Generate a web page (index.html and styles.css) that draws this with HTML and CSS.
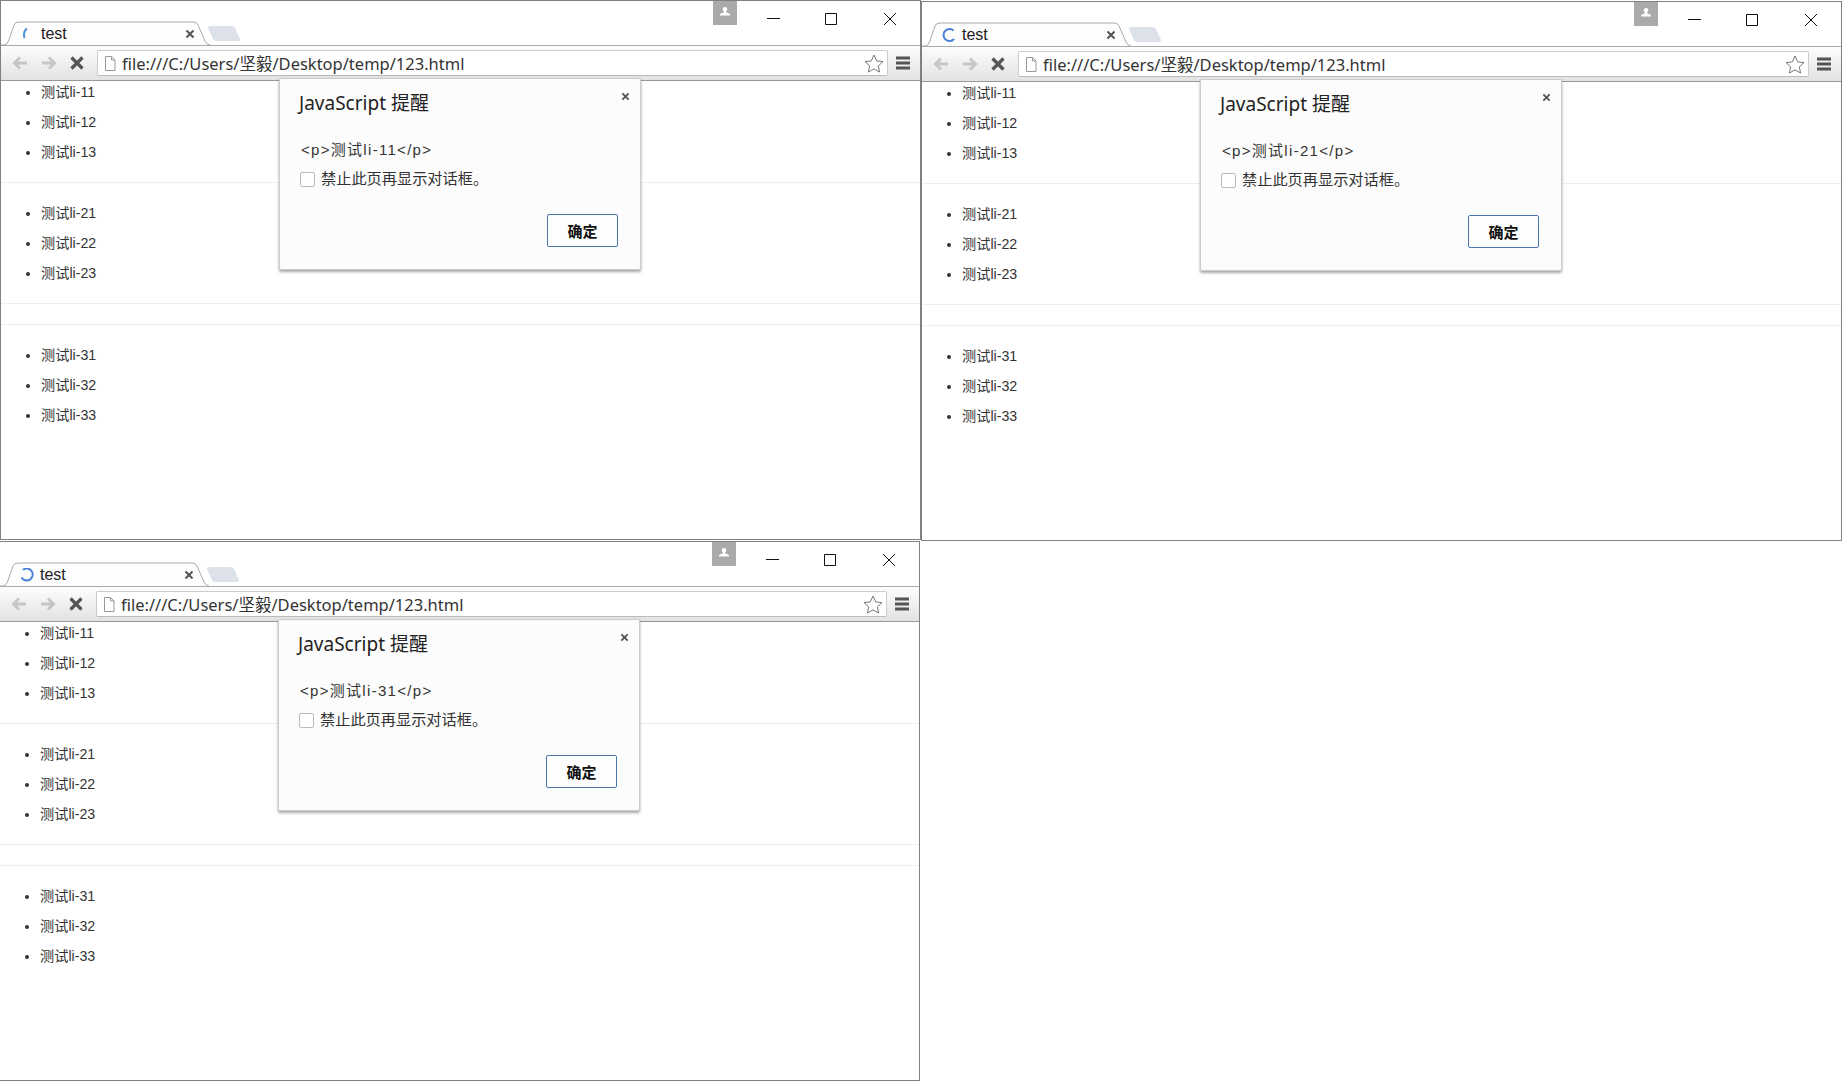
FILE: index.html
```html
<!DOCTYPE html>
<html>
  <head>
    <meta charset="UTF-8" />
    <title>test</title>
    <link rel="stylesheet" href="styles.css">
  </head>
  <body>
    <svg class="icon-defs" width="0" height="0">
      <symbol id="tab-shape" viewBox="0 0 210 25"><path d="M0 24H3Q6 24 7.500 20L13 4Q14 1 18 1H192Q196 1 197 4L204 20Q206 24 209 24" fill="#fdfdfd" stroke="#aaa"/></symbol>
      <symbol id="new-tab" viewBox="0 0 33 17"><path d="M3 1H25Q27 1 28 3L33 14Q33.500 16 31 16H9Q7 16 6 14L1 3Q1 1 3 1Z" fill="#dde1e9"/></symbol>
      <symbol id="tab-close" viewBox="0 0 10 10"><path d="M1.500 1.500L8.500 8.500M8.500 1.500L1.500 8.500" stroke="#555" stroke-width="2"/></symbol>
      <symbol id="back" viewBox="0 0 16 14"><path d="M15 7H3M8 1.500L2.500 7L8 12.500" fill="none" stroke="#c6c6c6" stroke-width="3"/></symbol>
      <symbol id="forward" viewBox="0 0 16 14"><path d="M1 7H13M8 1.500L13.500 7L8 12.500" fill="none" stroke="#c6c6c6" stroke-width="3"/></symbol>
      <symbol id="stop" viewBox="0 0 14 14"><path d="M1.500 1.500L12.500 12.500M12.500 1.500L1.500 12.500" stroke="#555" stroke-width="3.200"/></symbol>
      <symbol id="page" viewBox="0 0 12 15"><path d="M1.500 .5H7.500L11 4V14.500H1.500Z M7.500 .5V4H11" fill="#fff" stroke="#999"/></symbol>
      <symbol id="star" viewBox="0 0 20 19"><path d="M10 1L12.700 6.900L19 7.600L14.300 11.900L15.600 18L10 14.900L4.400 18L5.700 11.900L1 7.600L7.300 6.900Z" fill="#fff" stroke="#777"/></symbol>
      <symbol id="menu" viewBox="0 0 14 14"><path d="M0 2H14M0 7H14M0 12H14" stroke="#555" stroke-width="3"/></symbol>
      <symbol id="person" viewBox="0 0 24 25"><path d="M12 7a2.300 2.300 0 0 1 2.300 2.300c0 1-.5 1.800-1.200 2.300v.7L17 14v1.500H7V14l3.900-1.700v-.7c-.7-.5-1.200-1.300-1.200-2.300A2.300 2.300 0 0 1 12 7Z" fill="#fff"/></symbol>
      <symbol id="win-min" viewBox="0 0 13 12"><path d="M0 5.500H13" stroke="#111"/></symbol>
      <symbol id="win-max" viewBox="0 0 12 12"><path d="M.5 .5H11.500V11.500H.5Z" fill="none" stroke="#111"/></symbol>
      <symbol id="win-close" viewBox="0 0 12 12"><path d="M0 0L12 12M12 0L0 12" stroke="#111"/></symbol>
    </svg>

    <!-- window 1 -->
    <div class="window window-one">
      <div class="tabstrip">
        <div class="tab">
          <svg class="tab-bg"><use href="#tab-shape"/></svg>
          <svg class="spinner" viewBox="0 0 14 14"><path d="M6 1.500Q1.500 5 3.500 11" fill="none" stroke="#4a90d9" stroke-width="2"/></svg>
          <span class="tab-title">test</span>
          <svg class="tab-close"><use href="#tab-close"/></svg>
        </div>
        <svg class="new-tab"><use href="#new-tab"/></svg>
        <svg class="avatar"><use href="#person"/></svg>
        <svg class="cap cap-min"><use href="#win-min"/></svg>
        <svg class="cap cap-max"><use href="#win-max"/></svg>
        <svg class="cap cap-close"><use href="#win-close"/></svg>
      </div>
      <div class="toolbar">
        <svg class="nav"><use href="#back"/></svg>
        <svg class="nav"><use href="#forward"/></svg>
        <svg class="nav nav-stop"><use href="#stop"/></svg>
        <div class="address">
          <svg class="page-icon"><use href="#page"/></svg>
          <span class="url">file:///C:/Users/坚毅/Desktop/temp/123.html</span>
          <svg class="star"><use href="#star"/></svg>
        </div>
        <svg class="menu"><use href="#menu"/></svg>
      </div>
      <div class="content">
        <ul class="first">
          <li>测试li-11</li>
          <li>测试li-12</li>
          <li>测试li-13</li>
        </ul>
        <hr>
        <ul>
          <li>测试li-21</li>
          <li>测试li-22</li>
          <li>测试li-23</li>
        </ul>
        <hr>
        <hr>
        <ul>
          <li>测试li-31</li>
          <li>测试li-32</li>
          <li>测试li-33</li>
        </ul>
      </div>
      <div class="dialog">
        <svg class="dialog-close"><use href="#tab-close"/></svg>
        <div class="dialog-title">JavaScript 提醒</div>
        <div class="dialog-msg">&lt;p&gt;测试li-11&lt;/p&gt;</div>
        <label class="dialog-check"><span class="box"></span>禁止此页再显示对话框。</label>
        <div class="dialog-foot"><button>确定</button></div>
      </div>
    </div>

    <!-- window 2 -->
    <div class="window window-two">
      <div class="tabstrip">
        <div class="tab">
          <svg class="tab-bg"><use href="#tab-shape"/></svg>
          <svg class="spinner" viewBox="0 0 14 14"><path d="M11.500 2.500A6 6 0 1 0 12 11" fill="none" stroke="#4a80d9" stroke-width="2"/></svg>
          <span class="tab-title">test</span>
          <svg class="tab-close"><use href="#tab-close"/></svg>
        </div>
        <svg class="new-tab"><use href="#new-tab"/></svg>
        <svg class="avatar"><use href="#person"/></svg>
        <svg class="cap cap-min"><use href="#win-min"/></svg>
        <svg class="cap cap-max"><use href="#win-max"/></svg>
        <svg class="cap cap-close"><use href="#win-close"/></svg>
      </div>
      <div class="toolbar">
        <svg class="nav"><use href="#back"/></svg>
        <svg class="nav"><use href="#forward"/></svg>
        <svg class="nav nav-stop"><use href="#stop"/></svg>
        <div class="address">
          <svg class="page-icon"><use href="#page"/></svg>
          <span class="url">file:///C:/Users/坚毅/Desktop/temp/123.html</span>
          <svg class="star"><use href="#star"/></svg>
        </div>
        <svg class="menu"><use href="#menu"/></svg>
      </div>
      <div class="content">
        <ul class="first">
          <li>测试li-11</li>
          <li>测试li-12</li>
          <li>测试li-13</li>
        </ul>
        <hr>
        <ul>
          <li>测试li-21</li>
          <li>测试li-22</li>
          <li>测试li-23</li>
        </ul>
        <hr>
        <hr>
        <ul>
          <li>测试li-31</li>
          <li>测试li-32</li>
          <li>测试li-33</li>
        </ul>
      </div>
      <div class="dialog">
        <svg class="dialog-close"><use href="#tab-close"/></svg>
        <div class="dialog-title">JavaScript 提醒</div>
        <div class="dialog-msg">&lt;p&gt;测试li-21&lt;/p&gt;</div>
        <label class="dialog-check"><span class="box"></span>禁止此页再显示对话框。</label>
        <div class="dialog-foot"><button>确定</button></div>
      </div>
    </div>

    <!-- window 3 -->
    <div class="window window-three">
      <div class="tabstrip">
        <div class="tab">
          <svg class="tab-bg"><use href="#tab-shape"/></svg>
          <svg class="spinner" viewBox="0 0 14 14"><path d="M3 1.800A6 6 0 1 1 1.500 9.500" fill="none" stroke="#4a80d9" stroke-width="2"/></svg>
          <span class="tab-title">test</span>
          <svg class="tab-close"><use href="#tab-close"/></svg>
        </div>
        <svg class="new-tab"><use href="#new-tab"/></svg>
        <svg class="avatar"><use href="#person"/></svg>
        <svg class="cap cap-min"><use href="#win-min"/></svg>
        <svg class="cap cap-max"><use href="#win-max"/></svg>
        <svg class="cap cap-close"><use href="#win-close"/></svg>
      </div>
      <div class="toolbar">
        <svg class="nav"><use href="#back"/></svg>
        <svg class="nav"><use href="#forward"/></svg>
        <svg class="nav nav-stop"><use href="#stop"/></svg>
        <div class="address">
          <svg class="page-icon"><use href="#page"/></svg>
          <span class="url">file:///C:/Users/坚毅/Desktop/temp/123.html</span>
          <svg class="star"><use href="#star"/></svg>
        </div>
        <svg class="menu"><use href="#menu"/></svg>
      </div>
      <div class="content">
        <ul class="first">
          <li>测试li-11</li>
          <li>测试li-12</li>
          <li>测试li-13</li>
        </ul>
        <hr>
        <ul>
          <li>测试li-21</li>
          <li>测试li-22</li>
          <li>测试li-23</li>
        </ul>
        <hr>
        <hr>
        <ul>
          <li>测试li-31</li>
          <li>测试li-32</li>
          <li>测试li-33</li>
        </ul>
      </div>
      <div class="dialog">
        <svg class="dialog-close"><use href="#tab-close"/></svg>
        <div class="dialog-title">JavaScript 提醒</div>
        <div class="dialog-msg">&lt;p&gt;测试li-31&lt;/p&gt;</div>
        <label class="dialog-check"><span class="box"></span>禁止此页再显示对话框。</label>
        <div class="dialog-foot"><button>确定</button></div>
      </div>
    </div>
  </body>
</html>
```

FILE: styles.css
```css
html,
body {
  margin: 0;
  height: 100%;
  background: #fff;
  overflow: hidden;
}
body {
  position: relative;
  font-family: "Liberation Sans", "Noto Sans CJK SC", sans-serif;
  color: #333;
}
.icon-defs {
  position: absolute;
}

/* windows sit on the desktop */
.window {
  position: absolute;
  width: 921px;
  height: 540px;
  box-sizing: border-box;
  border: 1px solid #808080;
  background: #fff;
  overflow: hidden;
}
.window-one {
  left: 0;
  top: 0;
}
.window-two {
  left: 921px;
  top: 1px;
}
.window-three {
  left: -1px;
  top: 541px;
}

/* tab strip */
.tabstrip {
  display: flex;
  align-items: flex-start;
  height: 45px;
  box-sizing: border-box;
  border-bottom: 1px solid #aaa;
}
.tab {
  position: relative;
  display: flex;
  align-items: center;
  align-self: flex-end;
  width: 206px;
  height: 24px;
  margin-bottom: -1px;
  flex: none;
}
.tab-bg {
  position: absolute;
  left: 0;
  top: -1px;
  width: 210px;
  height: 25px;
}
.spinner {
  position: relative;
  width: 14px;
  height: 14px;
  margin-left: 20px;
}
.tab-title {
  position: relative;
  margin-left: 6px;
  font-size: 16px;
  color: #222;
}
.tab-close {
  position: relative;
  width: 10px;
  height: 10px;
  margin-left: auto;
  margin-right: 12px;
}
.new-tab {
  align-self: flex-end;
  width: 33px;
  height: 17px;
  margin: 0 0 3px 0;
  flex: none;
}
.avatar {
  width: 24px;
  height: 25px;
  margin-top: -1px;
  margin-left: auto;
  background: #aaa;
  flex: none;
}
.cap {
  flex: none;
  height: 12px;
  margin-top: 12px;
}
.cap-min {
  width: 13px;
  margin-left: 30px;
}
.cap-max {
  width: 12px;
  margin-left: 45px;
}
.cap-close {
  width: 12px;
  margin-left: 47px;
  margin-right: 24px;
}

/* toolbar */
.toolbar {
  display: flex;
  align-items: center;
  height: 35px;
  box-sizing: border-box;
  padding-left: 11px;
  background: linear-gradient(#fdfdfd, #e2e2e2);
  border-bottom: 1px solid #999;
}
.nav {
  width: 16px;
  height: 14px;
  margin-right: 13px;
  flex: none;
}
.nav-stop {
  width: 14px;
}
.address {
  display: flex;
  align-items: center;
  flex: 1;
  height: 26px;
  box-sizing: border-box;
  padding: 0 3px 0 6px;
  background: #fff;
  border: 1px solid #ccc;
  border-bottom-color: #bbb;
  border-radius: 2px;
}
.page-icon {
  width: 12px;
  height: 15px;
  flex: none;
}
.url {
  margin-left: 6px;
  font-family: "Noto Sans", "Noto Sans CJK SC", sans-serif;
  font-size: 16.500px;
  color: #333;
  white-space: nowrap;
}
.star {
  width: 20px;
  height: 19px;
  margin-left: auto;
  flex: none;
}
.menu {
  width: 14px;
  height: 14px;
  margin: 0 10px 0 8px;
  flex: none;
}

/* page content */
.content {
  font-size: 14.200px;
  color: #333;
}
.content ul {
  margin: 15px 0;
  padding-left: 40px;
}
.content ul.first {
  margin-top: -4px;
}
.content li {
  height: 30px;
  line-height: 30px;
}
.content hr {
  margin: 15px 0 20px;
  border: none;
  border-top: 1px solid #eee;
}
.content hr + ul {
  margin-top: -5px;
}

/* alert dialog */
.dialog {
  position: absolute;
  left: 278px;
  top: 77px;
  width: 362px;
  height: 192px;
  box-sizing: border-box;
  padding: 12px 19px 0;
  background: #fcfcfc;
  border: 1px solid #ccc;
  border-radius: 2px;
  box-shadow: 0 2px 3px rgba(0, 0, 0, 0.35);
}
.dialog-close {
  position: absolute;
  right: 10px;
  top: 13px;
  width: 9px;
  height: 9px;
}
.dialog-title {
  font-family: "Noto Sans", "Noto Sans CJK SC", sans-serif;
  font-size: 19px;
  line-height: 24px;
  color: #222;
}
.dialog-msg {
  margin-top: 25px;
  margin-left: 2px;
  font-size: 15px;
  line-height: 20px;
  letter-spacing: 1.300px;
  color: #333;
}
.dialog-check {
  display: flex;
  align-items: center;
  margin-top: 9px;
  margin-left: 1px;
  font-size: 15.200px;
  line-height: 20px;
  color: #333;
}
.box {
  width: 13px;
  height: 13px;
  margin-right: 6px;
  background: #fff;
  border: 1px solid #bbb;
  border-radius: 2px;
}
.dialog-foot {
  display: flex;
  justify-content: flex-end;
  margin-top: 25px;
  margin-right: 3px;
}
button {
  width: 71px;
  height: 33px;
  padding: 0;
  font-family: "Noto Sans CJK SC", sans-serif;
  font-size: 15px;
  font-weight: bold;
  color: #111;
  background: #fdfdfd;
  border: 1px solid #4a76ad;
  border-radius: 2px;
}
```
